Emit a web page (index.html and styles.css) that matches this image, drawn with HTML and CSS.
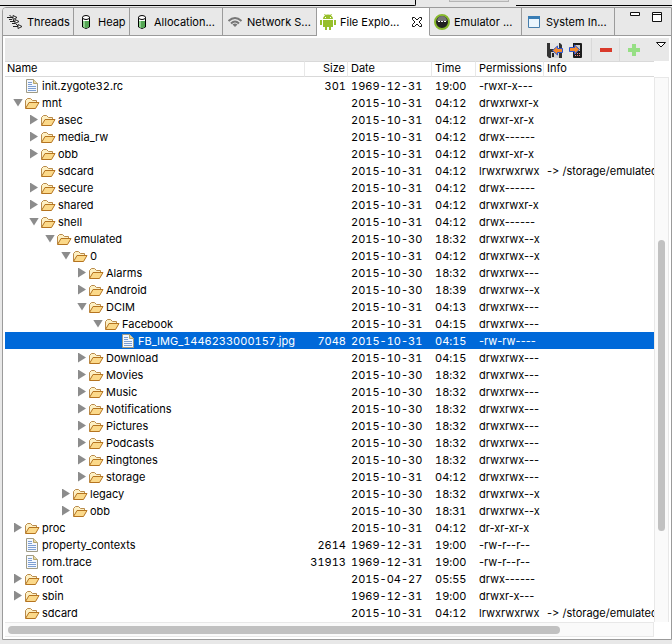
FILE: index.html
```
<!DOCTYPE html>
<html lang="en">
<head>
    <meta charset="UTF-8">
    <title>File Explorer</title>
    <link rel="stylesheet" href="styles.css">
</head>
<body>
    <svg class="defs" aria-hidden="true">
        <symbol id="folder" viewBox="0 0 16 16">
            <path d="M1.500 13V5.500L3.500 3.500h3L8.500 5.500h4v2" fill="#fdf0c4" stroke="#b98a4a"/>
            <path d="M1.500 13.500L5 7.500h10L11.500 13.500z" fill="#fbd98a" stroke="#b57420" stroke-linejoin="round"/>
        </symbol>
        <symbol id="file" viewBox="0 0 16 16">
            <path d="M2.500 1.500h7l4 4v9h-11z" fill="#f4f8ff" stroke="#a09c86"/>
            <path d="M9.500 1.500v4h4" fill="#e8d9a8" stroke="#b7a56c"/>
            <path d="M4 4.500h4M4 6.500h4M4 8.500h8M4 10.500h8M4 12.500h8" stroke="#7d9fd2"/>
        </symbol>
        <symbol id="heap" viewBox="0 0 16 16">
            <path d="M4.500 3v10q3.500 3 7 0V3" fill="#fff" stroke="#000"/>
            <path d="M5 7h6v6q-3 2-6 0z" fill="#55a755"/>
            <path d="M5 7h2v6.500L5 13z" fill="#8fd08f"/>
            <ellipse cx="8" cy="3.500" rx="3.500" ry="2" fill="#fff" stroke="#000"/>
        </symbol>
    </svg>

    <div class="topbar">
        <div class="edge-left"></div>
        <div class="grip"></div>
        <div class="edge-right"></div>
    </div>

    <main class="view">
        <nav class="tabs">
            <button class="tab threads">
                <svg viewBox="0 0 16 16">
                    <path d="M0 3.500h6M3 7.500h6M6 12.500h6M2 5.500h3M5 9.500h3M2.500 1L5 3.500M6 6l2 2M9 10l2 2" fill="none" stroke="#222"/>
                    <path d="M6 1.500l4 2-4 2zM8 5.500l4 2-4 2zM11 10.500l4 2-4 2z" fill="#fff" stroke="#222"/>
                </svg>
                <span>Threads</span>
            </button>
            <button class="tab heap"><svg><use href="#heap"/></svg><span>Heap</span></button>
            <button class="tab allocation"><svg><use href="#heap"/></svg><span>Allocation...</span></button>
            <button class="tab network">
                <svg viewBox="0 0 16 16"><path d="M1.500 7Q8 1 14.500 7M4 9.500q4-4 8 0" fill="none" stroke="#777" stroke-width="2"/><path d="M5.500 10.500q2.500-2 5 0L8 13z" fill="#777"/></svg>
                <span>Network S...</span>
            </button>
            <button class="tab explorer active">
                <svg viewBox="0 0 16 16"><path d="M3 5a5 4.500 0 0 1 10 0zM3 6h10v7H3zM0 6h2v5H0zM14 6h2v5h-2zM5 13h2v3H5zM9 13h2v3H9z" fill="#97bf2b"/><path d="M4.500 0l1.500 2M11.500 0L10 2" stroke="#97bf2b"/><path d="M5 3h1v1H5zM10 3h1v1h-1z" fill="#fff"/></svg>
                <span>File Explo...</span>
                <svg class="close" viewBox="0 0 12 12"><path d="M1.500 1.500h2L6 4l2.500-2.500h2v2L8 6l2.500 2.500v2h-2L6 8l-2.500 2.500h-2v-2L4 6 1.500 3.500z" fill="#fff" stroke="#111"/></svg>
            </button>
            <button class="tab emulator">
                <svg viewBox="0 0 16 16"><circle cx="8" cy="8" r="7" fill="#222" stroke="#87b92c" stroke-width="2"/><path d="M3 7a5 5 0 0 1 10 0z" fill="#777"/><path d="M4 7.500h2M7 7.500h2M10 7.500h2" stroke="#fff"/></svg>
                <span>Emulator ...</span>
            </button>
            <button class="tab system">
                <svg viewBox="0 0 16 16"><path d="M2.500 2.500h11v11h-11z" fill="#eaf5fd" stroke="#477eac"/><path d="M2 2h12v3H2z" fill="#397db5"/></svg>
                <span>System In...</span>
            </button>
            <div class="window-buttons">
                <button aria-label="Minimize"><svg viewBox="0 0 12 12"><path d="M1.500 1.500h9v3h-9z" fill="#fff" stroke="#111"/></svg></button>
                <button aria-label="Maximize"><svg viewBox="0 0 12 12"><path d="M1.500 1.500h9v9h-9zM1 3.500h10" fill="#fff" stroke="#111"/></svg></button>
            </div>
        </nav>

        <div class="toolbar">
            <button aria-label="Pull a file from the device">
                <svg viewBox="0 0 16 16">
                    <path d="M0 1h13l2 2v13H2l-2-2z" fill="#333"/>
                    <path d="M3 1h9v6H3z" fill="#e4e4e4"/>
                    <path d="M4 10h8v6H4z" fill="#d4d4d4"/>
                    <path d="M5 11h2v4H5z" fill="#222"/>
                    <path d="M5.500 8.500l5-4.500v2.500h5v4h-5V13z" fill="#f58a2c" stroke="#2d55cf"/>
                </svg>
            </button>
            <button aria-label="Push a file onto the device">
                <svg viewBox="0 0 16 16">
                    <path d="M4 1h8q1 0 1 1v13q0 1-1 1H5q-1 0-1-1z" fill="#1c1c1c"/>
                    <path d="M6 3h5v6H6z" fill="#ccc"/>
                    <path d="M6 11.500h1M8 11.500h1M10 11.500h1M6 13.500h1M8 13.500h1M10 13.500h1" stroke="#e88"/>
                    <path d="M10.500 7.500l-5-4.500v2.500h-5v4h5V12z" fill="#f58a2c" stroke="#2d55cf"/>
                </svg>
            </button>
            <button class="divided" aria-label="Delete the selection"><svg viewBox="0 0 16 16"><path d="M2 6h12v4H2z" fill="#d93a2b"/></svg></button>
            <button class="divided" aria-label="New folder"><svg viewBox="0 0 16 16"><path d="M6 2h4v4h4v4h-4v4H6v-4H2V6h4z" fill="#96df84"/></svg></button>
            <button class="menu" aria-label="View menu"><svg viewBox="0 0 12 8"><path d="M1.500 1.500h9L6 6z" fill="#fff" stroke="#111"/></svg></button>
        </div>

        <div class="explorer-body">
            <div class="files">
                <table>
                    <colgroup>
                        <col>
                        <col class="col-size">
                        <col class="col-date">
                        <col class="col-time">
                        <col class="col-permissions">
                        <col class="col-info">
                    </colgroup>
                    <thead>
                        <tr><th>Name</th><th>Size</th><th>Date</th><th>Time</th><th>Permissions</th><th>Info</th></tr>
                    </thead>
                    <tbody>
                        <tr><td class="d0"><i></i><svg><use href="#file"/></svg>init.zygote32.rc</td><td>301</td><td>1969-12-31</td><td>19:00</td><td>-rwxr-x---</td><td></td></tr>
                        <tr><td class="d0"><i class="open"></i><svg><use href="#folder"/></svg>mnt</td><td></td><td>2015-10-31</td><td>04:12</td><td>drwxrwxr-x</td><td></td></tr>
                        <tr><td class="d1"><i class="closed"></i><svg><use href="#folder"/></svg>asec</td><td></td><td>2015-10-31</td><td>04:12</td><td>drwxr-xr-x</td><td></td></tr>
                        <tr><td class="d1"><i class="closed"></i><svg><use href="#folder"/></svg>media_rw</td><td></td><td>2015-10-31</td><td>04:12</td><td>drwx------</td><td></td></tr>
                        <tr><td class="d1"><i class="closed"></i><svg><use href="#folder"/></svg>obb</td><td></td><td>2015-10-31</td><td>04:12</td><td>drwxr-xr-x</td><td></td></tr>
                        <tr><td class="d1"><i></i><svg><use href="#folder"/></svg>sdcard</td><td></td><td>2015-10-31</td><td>04:12</td><td>lrwxrwxrwx</td><td>-&gt; /storage/emulated</td></tr>
                        <tr><td class="d1"><i class="closed"></i><svg><use href="#folder"/></svg>secure</td><td></td><td>2015-10-31</td><td>04:12</td><td>drwx------</td><td></td></tr>
                        <tr><td class="d1"><i class="closed"></i><svg><use href="#folder"/></svg>shared</td><td></td><td>2015-10-31</td><td>04:12</td><td>drwxrwxr-x</td><td></td></tr>
                        <tr><td class="d1"><i class="open"></i><svg><use href="#folder"/></svg>shell</td><td></td><td>2015-10-31</td><td>04:12</td><td>drwx------</td><td></td></tr>
                        <tr><td class="d2"><i class="open"></i><svg><use href="#folder"/></svg>emulated</td><td></td><td>2015-10-30</td><td>18:32</td><td>drwxrwx--x</td><td></td></tr>
                        <tr><td class="d3"><i class="open"></i><svg><use href="#folder"/></svg>0</td><td></td><td>2015-10-31</td><td>04:12</td><td>drwxrwx--x</td><td></td></tr>
                        <tr><td class="d4"><i class="closed"></i><svg><use href="#folder"/></svg>Alarms</td><td></td><td>2015-10-30</td><td>18:32</td><td>drwxrwx---</td><td></td></tr>
                        <tr><td class="d4"><i class="closed"></i><svg><use href="#folder"/></svg>Android</td><td></td><td>2015-10-30</td><td>18:39</td><td>drwxrwx--x</td><td></td></tr>
                        <tr><td class="d4"><i class="open"></i><svg><use href="#folder"/></svg>DCIM</td><td></td><td>2015-10-31</td><td>04:13</td><td>drwxrwx---</td><td></td></tr>
                        <tr><td class="d5"><i class="open"></i><svg><use href="#folder"/></svg>Facebook</td><td></td><td>2015-10-31</td><td>04:15</td><td>drwxrwx---</td><td></td></tr>
                        <tr class="selected"><td class="d6"><i></i><svg><use href="#file"/></svg>FB_IMG_1446233000157.jpg</td><td>7048</td><td>2015-10-31</td><td>04:15</td><td>-rw-rw----</td><td></td></tr>
                        <tr><td class="d4"><i class="closed"></i><svg><use href="#folder"/></svg>Download</td><td></td><td>2015-10-31</td><td>04:15</td><td>drwxrwx---</td><td></td></tr>
                        <tr><td class="d4"><i class="closed"></i><svg><use href="#folder"/></svg>Movies</td><td></td><td>2015-10-30</td><td>18:32</td><td>drwxrwx---</td><td></td></tr>
                        <tr><td class="d4"><i class="closed"></i><svg><use href="#folder"/></svg>Music</td><td></td><td>2015-10-30</td><td>18:32</td><td>drwxrwx---</td><td></td></tr>
                        <tr><td class="d4"><i class="closed"></i><svg><use href="#folder"/></svg>Notifications</td><td></td><td>2015-10-30</td><td>18:32</td><td>drwxrwx---</td><td></td></tr>
                        <tr><td class="d4"><i class="closed"></i><svg><use href="#folder"/></svg>Pictures</td><td></td><td>2015-10-30</td><td>18:32</td><td>drwxrwx---</td><td></td></tr>
                        <tr><td class="d4"><i class="closed"></i><svg><use href="#folder"/></svg>Podcasts</td><td></td><td>2015-10-30</td><td>18:32</td><td>drwxrwx---</td><td></td></tr>
                        <tr><td class="d4"><i class="closed"></i><svg><use href="#folder"/></svg>Ringtones</td><td></td><td>2015-10-30</td><td>18:32</td><td>drwxrwx---</td><td></td></tr>
                        <tr><td class="d4"><i class="closed"></i><svg><use href="#folder"/></svg>storage</td><td></td><td>2015-10-31</td><td>04:12</td><td>drwxrwx---</td><td></td></tr>
                        <tr><td class="d3"><i class="closed"></i><svg><use href="#folder"/></svg>legacy</td><td></td><td>2015-10-30</td><td>18:32</td><td>drwxrwx--x</td><td></td></tr>
                        <tr><td class="d3"><i class="closed"></i><svg><use href="#folder"/></svg>obb</td><td></td><td>2015-10-30</td><td>18:31</td><td>drwxrwx--x</td><td></td></tr>
                        <tr><td class="d0"><i class="closed"></i><svg><use href="#folder"/></svg>proc</td><td></td><td>2015-10-31</td><td>04:12</td><td>dr-xr-xr-x</td><td></td></tr>
                        <tr><td class="d0"><i></i><svg><use href="#file"/></svg>property_contexts</td><td>2614</td><td>1969-12-31</td><td>19:00</td><td>-rw-r--r--</td><td></td></tr>
                        <tr><td class="d0"><i></i><svg><use href="#file"/></svg>rom.trace</td><td>31913</td><td>1969-12-31</td><td>19:00</td><td>-rw-r--r--</td><td></td></tr>
                        <tr><td class="d0"><i class="closed"></i><svg><use href="#folder"/></svg>root</td><td></td><td>2015-04-27</td><td>05:55</td><td>drwx------</td><td></td></tr>
                        <tr><td class="d0"><i class="closed"></i><svg><use href="#folder"/></svg>sbin</td><td></td><td>1969-12-31</td><td>19:00</td><td>drwxr-x---</td><td></td></tr>
                        <tr><td class="d0"><i></i><svg><use href="#folder"/></svg>sdcard</td><td></td><td>2015-10-31</td><td>04:12</td><td>lrwxrwxrwx</td><td>-&gt; /storage/emulated</td></tr>
                    </tbody>
                </table>
            </div>
            <div class="scroll-y"><div class="thumb"></div></div>
            <div class="scroll-x"><div class="thumb"></div></div>
        </div>
    </main>
</body>
</html>
```
FILE: styles.css
```
:root {
    --grey: #e8e8e8;
    --line: #9b9b9b;
    --light-line: #d9d9d9;
    --track: #fafafa;
    --thumb: #c1c1c1;
    --blue: #0069d9;
}

* {
    box-sizing: border-box;
}

body {
    margin: 0;
    background-color: var(--grey);
    color: #000;
    font-family: Inter, sans-serif;
    font-size: 11px;
    line-height: 16px;
}

button {
    display: flex;
    align-items: center;
    margin: 0;
    padding: 0;
    border: none;
    background: none;
    color: inherit;
    font: inherit;
}

svg {
    display: block;
    flex: none;
    width: 16px;
    height: 16px;
}

.defs {
    display: none;
}

/* bottom edge of the panels above */
.topbar {
    display: flex;
    height: 6px;
    margin-bottom: 1px;
}

.edge-left {
    width: 416px;
    border-right: 1px solid #000;
    border-bottom: 1px solid #000;
    border-radius: 0 0 2px 0;
}

.grip {
    width: 60px;
    height: 2px;
    margin: 0 7px 0 33px;
    background-color: #dcdcdc;
    border: 1px solid #b5b5b5;
    border-top: none;
}

.edge-right {
    flex: 1;
    border-bottom: 1px solid #000;
}

.view {
    margin: 0 0 0 2px;
    padding-bottom: 2px;
    border: 1px solid var(--line);
    border-radius: 4px 0 0 0;
    background-color: #fff;
    overflow: hidden;
}

/* tabs */
.tabs {
    display: flex;
    height: 28px;
    background-color: var(--grey);
}

.tab {
    gap: 4px;
    padding-left: 4px;
    border-right: 1px solid var(--line);
    border-bottom: 1px solid var(--line);
    white-space: nowrap;
    overflow: hidden;
}

.tab.active {
    padding-left: 3px;
    background-color: #fff;
    border-bottom-color: #fff;
}

.threads {
    width: 71px;
}

.heap {
    width: 56px;
}

.allocation {
    width: 93px;
}

.network {
    width: 94px;
}

.explorer {
    width: 113px;
}

.emulator {
    width: 92px;
}

.system {
    width: 93px;
}

.close {
    width: 12px;
    height: 12px;
    margin-left: auto;
    margin-right: 6px;
}

.window-buttons {
    display: flex;
    flex: 1;
    justify-content: flex-end;
    align-items: flex-start;
    gap: 10px;
    padding: 3px 8px 0 0;
    border-bottom: 1px solid var(--line);
}

.window-buttons svg {
    width: 12px;
    height: 12px;
}

/* toolbar */
.toolbar {
    display: flex;
    justify-content: flex-end;
    height: 23px;
    margin: 2px 2px 0;
    background-color: var(--grey);
}

.toolbar button {
    width: 22px;
}

.toolbar .divided {
    width: 28px;
    justify-content: center;
    border-left: 1px solid var(--light-line);
}

.toolbar .menu {
    width: 22px;
    align-items: flex-start;
    justify-content: flex-end;
    padding: 3px 2px 0 0;
}

.menu svg {
    width: 12px;
    height: 8px;
}

/* file table */
.explorer-body {
    display: grid;
    grid-template-columns: 1fr 15px;
    margin: 0 2px;
}

.files {
    min-width: 0;
    padding-bottom: 1px;
    overflow: hidden;
}

table {
    width: 100%;
    table-layout: fixed;
    border-collapse: separate;
    border-spacing: 0;
    font-feature-settings: "tnum" 1, "calt" 0;
}

.col-size {
    width: 43px;
}

.col-date {
    width: 84px;
}

.col-time {
    width: 44px;
}

.col-permissions {
    width: 68px;
}

.col-info {
    width: 110px;
}

th,
td {
    padding: 0 0 0 3px;
    font-weight: normal;
    text-align: left;
    white-space: nowrap;
    overflow: hidden;
}

th {
    height: 16px;
    padding-bottom: 2px;
    line-height: 12px;
    border-top: 1px solid var(--light-line);
    border-bottom: 1px solid var(--light-line);
    border-right: 1px solid var(--grey);
}

th:last-child {
    border-right: none;
}

th:first-child {
    padding-left: 2px;
}

th:nth-child(2),
td:nth-child(2) {
    padding-left: 0;
    padding-right: 2px;
    text-align: right;
}

td {
    height: 17px;
}

td:first-child {
    display: flex;
    align-items: center;
}

/* narrow hyphens for permissions and link targets */
td:nth-child(n+5) {
    font-feature-settings: "calt" 0;
}

td svg {
    margin: 0 2px 0 1px;
}

.d0 { padding-left: 8px; }
.d1 { padding-left: 24px; }
.d2 { padding-left: 40px; }
.d3 { padding-left: 56px; }
.d4 { padding-left: 72px; }
.d5 { padding-left: 88px; }
.d6 { padding-left: 104px; }

td i {
    flex: none;
    width: 10px;
    height: 8px;
}

.open,
.closed {
    background-color: #8c8c8c;
}

.open {
    clip-path: polygon(0 0, 100% 0, 50% 100%);
}

.closed {
    height: 10px;
    clip-path: polygon(10% 0, 90% 50%, 10% 100%);
}

.selected {
    background-color: var(--blue);
    color: #fff;
}

/* scroll bars */
.scroll-y {
    margin-top: 16px;
    padding: 162px 3px 0;
    border: 1px solid var(--grey);
    border-bottom: none;
    background-color: var(--track);
}

.scroll-y .thumb {
    height: 291px;
}

.scroll-x {
    height: 15px;
    padding: 3px;
    border: 1px solid var(--grey);
    border-left: none;
    background-color: var(--track);
}

.scroll-x .thumb {
    width: 86%;
    height: 8px;
}

.thumb {
    border-radius: 4px;
    background-color: var(--thumb);
}
```
